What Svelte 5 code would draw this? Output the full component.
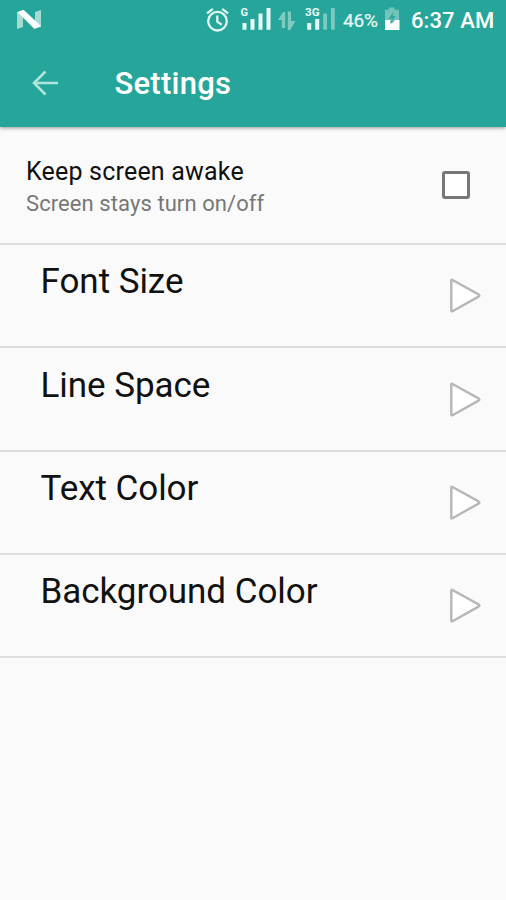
<script>
  const options = ['Font Size', 'Line Space', 'Text Color', 'Background Color'];
</script>

<div class="screen">
  <header>
    <div class="status">
      <svg class="notification" width="28" height="24" viewBox="0 0 28 24">
        <path d="M1 3v17l6-2V3z M19 3l6-2v17l-6 1z" fill="#a5dbd2" />
        <path d="M1.5 3 7.5 .8 25 17 18.5 20z" fill="#fff" />
      </svg>
      <svg class="alarm" width="26" height="28" viewBox="0 0 26 28" fill="none" stroke="#e0f6f2" stroke-width="2.3">
        <circle cx="12.5" cy="15.2" r="9.3" />
        <path d="M2 7.3 7.8 2.8M23 7.3 17.2 2.8M12.3 9.5v6.2l4.5 3" />
      </svg>
      <svg class="signals" width="98" height="28" viewBox="0 0 98 28">
        <g fill="#e8faf7">
          <text x="0.5" y="11" font-size="11" textLength="7.5" lengthAdjust="spacingAndGlyphs">G</text>
          <path d="M2.5 18h4v6.8h-4zM10.5 14h4v10.8h-4zM18.5 8.5h4v16.3h-4zM26.5 3h4v21.8h-4z" />
        </g>
        <path d="M38 15 43 7h2.2v16h-3.4v-8zM47.8 6.5H51V16h4.5l-5.5 9h-2.2z" fill="#7fcbc1" />
        <g fill="#e8faf7">
          <text x="65" y="11" font-size="11" textLength="14.5" lengthAdjust="spacingAndGlyphs">3G</text>
          <path d="M67.2 18h4v6.8h-4zM75.2 14h4v10.8h-4z" />
        </g>
        <path d="M83.2 8.5h3.8v16.3h-3.8zM91 3h3.8v21.8H91z" fill="#7cc9bf" />
      </svg>
      <span class="percent">46%</span>
      <svg class="battery" width="17" height="24" viewBox="0 0 17 24">
        <path d="M5 .5h5.5v2.3h4.5V14H1V2.8h4z" fill="#72c4ba" />
        <path d="M9.5 4.5 4.5 12H8l-1 3 5-6H8.8z" fill="#33a99d" />
        <path d="M1 13h5.5v4l5-4H15.5v10H1z" fill="#fff" />
      </svg>
      <span class="time">6:37 AM</span>
    </div>
    <div class="bar">
      <svg class="back" width="28" height="28" viewBox="0 0 28 28" fill="none" stroke="#afe4dc" stroke-width="2.6">
        <path d="M14.5 2.5 3 14l11.5 11.5M2.5 14h24.5" />
      </svg>
      <h1>Settings</h1>
    </div>
  </header>

  <main>
    <section class="awake">
      <div>
        <div class="title">Keep screen awake</div>
        <div class="hint">Screen stays turn on/off</div>
      </div>
      <span class="checkbox"></span>
    </section>
    {#each options as option}
      <section class="option">
        <span class="label">{option}</span>
        <svg width="34" height="38" viewBox="0 0 34 38">
          <path d="M3.3 3.6Q3.3 2.4 4.5 3L30.5 17.4Q32.3 18.5 30.5 19.6L4.5 34.2Q3.3 34.8 3.3 33.6Z" fill="#fff" stroke="#b7b7b7" stroke-width="2.4" stroke-linejoin="round" />
        </svg>
      </section>
    {/each}
  </main>
</div>

<style>
  :global(body) { margin: 0; background: #fafafa; }
  .screen {
    width: 506px;
    height: 900px;
    overflow: hidden;
    background: #fafafa;
    font-family: Roboto, "Liberation Sans", sans-serif;
  }
  header {
    height: 127px;
    background: #26a69a;
    box-shadow: 0 1px 4px rgba(0, 0, 0, 0.4);
  }
  .status { display: flex; height: 40px; color: #fff; white-space: nowrap; }
  .notification { margin: 9px 0 0 16px; }
  .alarm { margin: 6px 0 0 161px; }
  .signals { margin: 5px 0 0 9px; font-weight: 700; }
  .percent { width: 43px; margin-left: 5px; font-size: 19px; line-height: 41px; letter-spacing: -0.2px; color: #e8f8f5; -webkit-text-stroke: 0.2px #e8f8f5; }
  .battery { margin: 7px 0 0 -2px; }
  .time { margin-left: 10px; font-size: 22px; font-weight: 500; line-height: 41px; letter-spacing: 0.1px; }
  .bar { display: flex; height: 86px; align-items: center; }
  .back { margin-left: 30.5px; }
  h1 { margin: 1px 0 0 56px; font-size: 31px; font-weight: 500; line-height: 40px; letter-spacing: 0.25px; color: #fff; }
  section { display: flex; box-sizing: border-box; justify-content: space-between; border-bottom: 2px solid #dedede; }
  .awake { height: 118px; padding: 29px 36px 0 26px; }
  .title { font-size: 25px; line-height: 32px; color: #111; letter-spacing: 0.2px; }
  .hint { font-size: 22px; line-height: 32px; color: #777; letter-spacing: 0.08px; }
  .checkbox { box-sizing: border-box; width: 28px; height: 28px; margin-top: 15px; border: 3px solid #777; border-radius: 3px; background: #fff; }
  .option { height: 103.25px; padding: 17.4px 24px 0 40.5px; }
  .label { font-size: 35px; line-height: 40px; color: #111; letter-spacing: -0.05px; }
  .option svg { margin-top: 15px; }
</style>
